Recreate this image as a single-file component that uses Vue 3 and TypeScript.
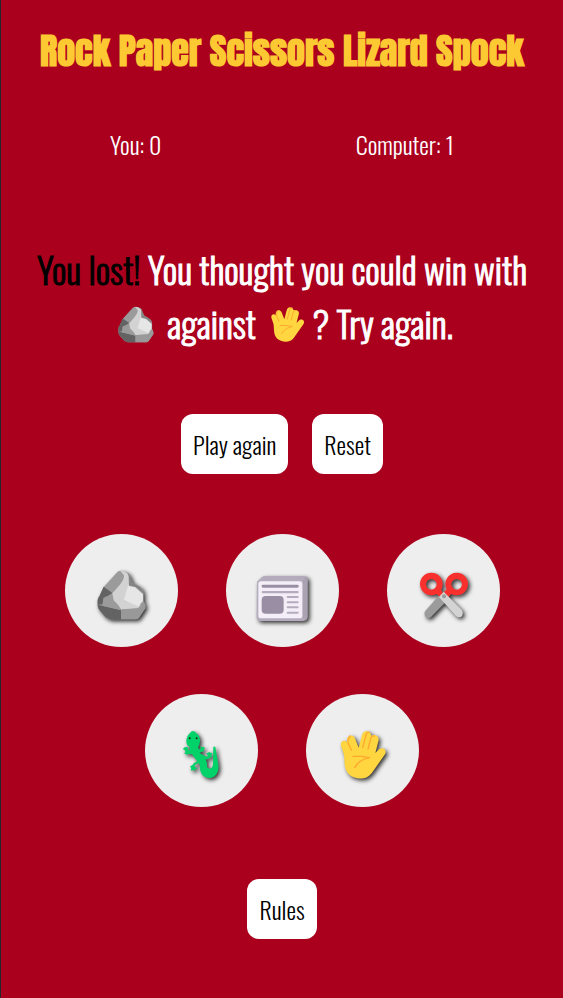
<script setup lang="ts">
import { ref } from 'vue'

interface Move {
  id: string
  label: string
}

const rows: Move[][] = [
  [
    { id: 'rock', label: 'Rock' },
    { id: 'paper', label: 'Paper' },
    { id: 'scissors', label: 'Scissors' },
  ],
  [
    { id: 'lizard', label: 'Lizard' },
    { id: 'spock', label: 'Spock' },
  ],
]

const you = ref(0)
const computer = ref(1)
</script>

<template>
  <svg class="sprite" aria-hidden="true">
    <symbol id="rock" viewBox="112 124 168 168">
      <path fill="#9b9b9b" d="M186 138Q197 132 209 138L220 145L231 171L248 181Q257 185 261 192L264 203V226L269 238V248L250 276Q247 281 239 281H164L150 275L132 254Q126 247 126 240V224Q127 217 131 212L144 184Z" />
      <path fill="#636363" d="M144 183L170 202L149 216L142 236L126 237V224Q127 216 132 210ZM126 237L139 240L196 254V281H164L150 275L132 254Q126 247 126 237Z" />
      <path fill="#9b9b9b" d="M143 216L170 205L173 225L188 240L196 253L140 240Z" />
      <path fill="#858585" d="M209 138L220 145L231 171L250 182Q260 188 262 202L240 184L218 178Z" />
      <path fill="#d2d2d2" d="M194 136Q203 135 210 139Q218 144 219 151L220 180L205 225L261 239L248 248L196 251L188 239L174 224L170 203L190 180Q207 161 205 149Z" />
      <path fill="#e6e6e6" d="M217 180L239 185L262 206V226L248 242L204 224Z" />
      <path fill="#999" d="M196 253L247 248L264 228L269 238V248L250 276Q247 281 239 281H196Z" />
    </symbol>
    <symbol id="paper" viewBox="112 124 168 168">
      <path fill="#b4acbc" d="M121 168L136 154Q140 151 146 151H261Q273 151 273 163V272Q273 286 259 286H133Q120 286 120 273Z" />
      <path fill="#998ea4" d="M258 272L267 284Q273 280 273 270V160Q273 154 267 152L259 164Z" opacity=".35" />
      <rect x="125" y="167" width="132" height="111" rx="8" fill="#f3eef8" />
      <rect x="135" y="177" width="111" height="9" rx="4" fill="#998ea4" />
      <rect x="135" y="196" width="111" height="7" rx="3" fill="#b4acbc" />
      <rect x="135" y="211" width="66" height="53" rx="12" fill="#998ea4" />
      <path fill="none" stroke="#b4acbc" stroke-width="6" stroke-linecap="round" d="M213 214H243M213 230H243M213 245H243M213 261H243" />
    </symbol>
    <symbol id="scissors" viewBox="112 124 168 168">
      <path fill="#9b9b9b" d="M188 204L210 223L160 274Q155 279 147 276Q139 272 141 260L143 256Z" />
      <path fill="#f8312f" fill-rule="evenodd" d="M161 141A34 34 0 1 0 161 209Q169 209 177 205L186 213L196 204L191 192Q195 184 195 175A34 34 0 0 0 161 141ZM161 160A16 16 0 1 1 161 192A16 16 0 1 1 161 160Z" />
      <path fill="#f8312f" fill-rule="evenodd" d="M237 141A34 34 0 0 0 207 191L190 208L207 221L220 205Q228 209 237 209A34 34 0 1 0 237 141ZM237 160A16 16 0 1 1 237 192A16 16 0 1 1 237 160Z" />
      <path fill="#d3d3d3" d="M198 198L252 252Q257 258 255 266Q253 276 244 275Q239 275 234 270L184 214Z" />
      <circle cx="199" cy="212" r="6" fill="#9b9b9b" />
    </symbol>
    <symbol id="lizard" viewBox="112 124 168 168">
      <path fill="#00d26a" d="M169 136Q174 136 179 143Q191 153 190 167Q189 178 184 185L187 191Q192 192 193 187L191 182Q196 185 202 184Q206 188 201 192L203 196L197 198L188 201L200 209L211 213L214 210L208 203L214 202L217 198L221 201L227 202L224 208L226 213L219 216Q212 223 206 220Q212 228 211 239Q211 249 218 249Q228 249 229 236L230 184Q232 181 236 184L245 237C248 260 236 277 218 277C198 276 188 260 190 238L185 232L179 236Q172 239 175 244L182 249L176 251L173 256L168 253L162 255L164 248L160 242L167 239L172 232L182 227L166 206L152 204L152 211L148 205L142 204L147 199L144 193L138 190L144 185L151 184L155 187L154 193L159 195L159 184Q149 178 149 166Q149 153 160 142Q164 136 169 136Z" />
      <circle cx="159" cy="158" r="3" fill="#242424" />
      <circle cx="180" cy="158" r="3" fill="#242424" />
    </symbol>
    <symbol id="spock" viewBox="112 124 168 168">
      <path fill="#ffd640" d="M130 180C127 165 142 161 148 171C144 150 163 143 171 156L183 186L193 149C196 133 217 133 221 150C230 145 244 150 243 163L233 202L245 190C257 183 270 195 261 207L223 261C211 278 190 283 169 275C151 269 142 253 141 235L139 207Z" />
      <path fill="none" stroke="#ffa82f" stroke-width="4" stroke-linecap="round" stroke-linejoin="round" d="M151 167Q151 158 157 151M151 171L161 194M195 186L206 145Q210 138 215 140M211 190L220 156Q224 150 230 151M166 212H190L216 216C196 220 180 230 171 246" />
    </symbol>
  </svg>

  <main class="game">
    <h1 class="title">Rock Paper Scissors Lizard Spock</h1>

    <section class="scores" aria-label="Scores">
      <p>You: {{ you }}</p>
      <p>Computer: {{ computer }}</p>
    </section>

    <p class="result">
      <span class="verdict">You lost!</span> You thought you could win with
      <svg class="inline-icon" role="img" aria-label="Rock"><use href="#rock" /></svg>
      against
      <svg class="inline-icon" role="img" aria-label="Spock"><use href="#spock" /></svg>? Try again.
    </p>

    <div class="actions">
      <button type="button" class="action">Play again</button>
      <button type="button" class="action">Reset</button>
    </div>

    <div class="moves">
      <div v-for="(row, index) in rows" :key="index" class="move-row">
        <button v-for="move in row" :key="move.id" type="button" class="move" :aria-label="move.label">
          <svg class="move-icon" aria-hidden="true"><use :href="'#' + move.id" /></svg>
        </button>
      </div>
    </div>

    <button type="button" class="action">Rules</button>
  </main>
</template>

<style>
body {
  background: #aa001e;
}
</style>

<style scoped>
.sprite {
  position: absolute;
  width: 0;
  height: 0;
}

.game {
  box-sizing: border-box;
  min-height: 100vh;
  display: flex;
  flex-direction: column;
  align-items: center;
  padding: 21px 12px 48px;
  border-left: 1px solid #26262b;
  background: #aa001e;
  color: #fff;
  font-family: "Oswald", sans-serif;
  font-size: 24px;
  font-weight: 300;
}

.title {
  margin: 0;
  color: #fdc933;
  font-family: "Anton", sans-serif;
  font-size: 36px;
  line-height: 60px;
  font-weight: 700;
  text-align: center;
}

.scores {
  align-self: stretch;
  display: flex;
  justify-content: space-around;
  margin-top: 45px;
  line-height: 36px;
}

.scores p {
  margin: 0;
}

.result {
  margin: 80px 0 0;
  padding: 0 16px;
  font-size: 36px;
  line-height: 54px;
  text-align: center;
  -webkit-text-stroke: 1px currentColor;
}

.verdict {
  color: #000;
}

.inline-icon {
  width: 41px;
  height: 41px;
  margin: 0 4px;
  vertical-align: -6px;
}

.actions {
  display: flex;
  gap: 24px;
  margin: 64px 0 60px;
}

.action {
  height: 60px;
  padding: 0 12px;
  border: 0;
  border-radius: 12px;
  background: #fff;
  color: #000;
  font: inherit;
  cursor: pointer;
}

.moves {
  display: flex;
  flex-direction: column;
  gap: 47px;
  margin-bottom: 72px;
}

.move-row {
  display: flex;
  justify-content: center;
  gap: 48px;
}

.move {
  box-sizing: border-box;
  display: flex;
  align-items: center;
  justify-content: center;
  width: 113px;
  height: 113px;
  padding: 8px 0 0;
  border: 0;
  border-radius: 50%;
  background: #eee;
  cursor: pointer;
}

.move-icon {
  width: 56px;
  height: 56px;
  overflow: visible;
  filter: drop-shadow(2px 2px 2px rgba(0, 0, 0, 0.8));
}
</style>
